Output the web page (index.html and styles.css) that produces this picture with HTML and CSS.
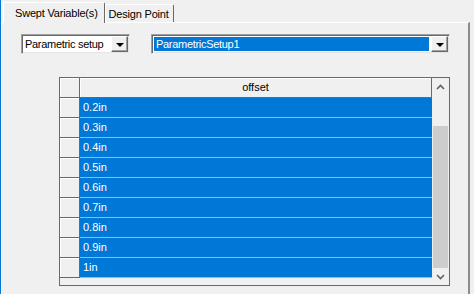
FILE: index.html
```html
<!DOCTYPE html>
<html>
<head>
    <title>Parametric Results</title>
    <link rel="stylesheet" href="styles.css">
</head>
<body>
    <div class="window">
        <div class="tabs">
            <div class="tab active">Swept Variable(s)</div>
            <div class="tab">Design Point</div>
        </div>

        <div class="panel">
            <div class="combos">
                <div class="combo small">
                    <div class="combo-text">Parametric setup</div>
                    <div class="drop"><span class="arrow"></span></div>
                </div>
                <div class="combo wide">
                    <div class="combo-text selected">ParametricSetup1</div>
                    <div class="drop"><span class="arrow"></span></div>
                </div>
            </div>

            <!-- Swept values table -->
            <div class="grid">
                <div class="grid-body">
                    <div class="row head">
                        <div class="rh"></div>
                        <div class="hcell">offset</div>
                    </div>
                    <div class="row"><div class="rh"></div><div class="cell">0.2in</div></div>
                    <div class="row"><div class="rh"></div><div class="cell">0.3in</div></div>
                    <div class="row"><div class="rh"></div><div class="cell">0.4in</div></div>
                    <div class="row"><div class="rh"></div><div class="cell">0.5in</div></div>
                    <div class="row"><div class="rh"></div><div class="cell">0.6in</div></div>
                    <div class="row"><div class="rh"></div><div class="cell">0.7in</div></div>
                    <div class="row"><div class="rh"></div><div class="cell">0.8in</div></div>
                    <div class="row"><div class="rh"></div><div class="cell">0.9in</div></div>
                    <div class="row"><div class="rh"></div><div class="cell">1in</div></div>
                </div>
                <div class="scrollbar">
                    <div class="sb-btn">
                        <svg width="9" height="6" viewBox="0 0 9 6"><path d="M1 5 L4.5 1.5 L8 5" fill="none" stroke="#606060" stroke-width="1.6"/></svg>
                    </div>
                    <div class="sb-track">
                        <div class="sb-thumb"></div>
                    </div>
                    <div class="sb-btn">
                        <svg width="9" height="6" viewBox="0 0 9 6"><path d="M1 1 L4.5 4.5 L8 1" fill="none" stroke="#606060" stroke-width="1.6"/></svg>
                    </div>
                </div>
            </div>
        </div>
    </div>
</body>
</html>
```

FILE: styles.css
```css
body {
    margin: 0;
    width: 474px;
    height: 294px;
    overflow: hidden;
    background-color: #f0f0f0;
    font-family: 'Liberation Sans', Arial, sans-serif;
    font-size: 11px;
    color: #000;
}

.window {
    height: 294px;
    border-left: 1px solid #0078d7;
    display: flex;
    flex-direction: column;
}

/* Tab strip */
.tabs {
    display: flex;
    align-items: flex-end;
    height: 22px;
    padding-left: 2px;
    letter-spacing: -0.2px;
}

.tab {
    height: 17px;
    padding: 0 4px 0 3px;
    line-height: 18px;
    border-top: 1px solid #fff;
    border-left: 1px solid #fff;
    border-right: 1px solid #696969;
    border-radius: 2px 2px 0 0;
    background-color: #f0f0f0;
}

.tab.active {
    height: 20px;
    padding: 0 6px 0 11px;
    line-height: 20px;
    margin-bottom: -1px;
    position: relative;
    z-index: 1;
}

.panel {
    width: 466px;
    flex: 1;
    border-top: 1px solid #fff;
    border-left: 1px solid #fff;
    border-right: 2px solid #8c8c8c;
}

/* Combo boxes */
.combos {
    display: flex;
    gap: 21px;
    margin: 11px 0 0 19px;
}

.combo {
    display: flex;
    align-items: center;
    height: 16px;
    padding: 1px;
    background-color: #fff;
    border: 1px solid;
    border-color: #a0a0a0 #f0f0f0 #f0f0f0 #a0a0a0;
    box-shadow: inset 1px 1px #696969, inset -1px -1px #e3e3e3;
}

.combo.small {
    width: 105px;
}

.combo.wide {
    width: 295px;
}

.combo-text {
    flex: 1;
    height: 16px;
    line-height: 16px;
    padding-left: 2px;
    letter-spacing: -0.3px;
    white-space: nowrap;
    overflow: hidden;
}

.combo-text.selected {
    background-color: #0078d7;
    color: #fff;
    margin: 1px 2px 1px 1px;
    height: 14px;
    line-height: 14px;
}

.drop {
    width: 15px;
    height: 14px;
    background-color: #f0f0f0;
    border: 1px solid;
    border-color: #fff #696969 #696969 #fff;
    box-shadow: inset -1px -1px #a0a0a0;
    display: flex;
    align-items: center;
    justify-content: center;
}

.arrow {
    width: 0;
    height: 0;
    border-left: 4px solid transparent;
    border-right: 4px solid transparent;
    border-top: 4px solid #000;
    margin-top: 1px;
}

/* Grid */
.grid {
    display: flex;
    width: 389px;
    height: 207px;
    margin: 23px 0 0 57px;
    border: 1px solid #696969;
    background-color: #f0f0f0;
}

.grid-body {
    flex: 1;
}

.row {
    display: flex;
    height: 20px;
}

.rh {
    width: 19px;
    height: 19px;
    border-right: 1px solid #696969;
    border-bottom: 1px solid #696969;
    box-shadow: inset 1px 1px #fff;
}

.hcell {
    flex: 1;
    height: 19px;
    line-height: 19px;
    text-align: center;
    border-right: 1px solid #696969;
    border-bottom: 1px solid #696969;
    box-shadow: inset 1px 1px #fff;
}

.cell {
    flex: 1;
    height: 19px;
    line-height: 19px;
    padding-left: 3px;
    color: #fff;
    background-color: #0078d7;
    border-bottom: 1px solid #b4b4b4;
}

.scrollbar {
    width: 17px;
    display: flex;
    flex-direction: column;
}

.sb-btn {
    height: 17px;
    display: flex;
    align-items: center;
    justify-content: center;
}

.sb-track {
    flex: 1;
    padding: 31px 1px 0 1px;
    display: flex;
    flex-direction: column;
}

.sb-thumb {
    flex: 1;
    background-color: #cdcdcd;
}
```
